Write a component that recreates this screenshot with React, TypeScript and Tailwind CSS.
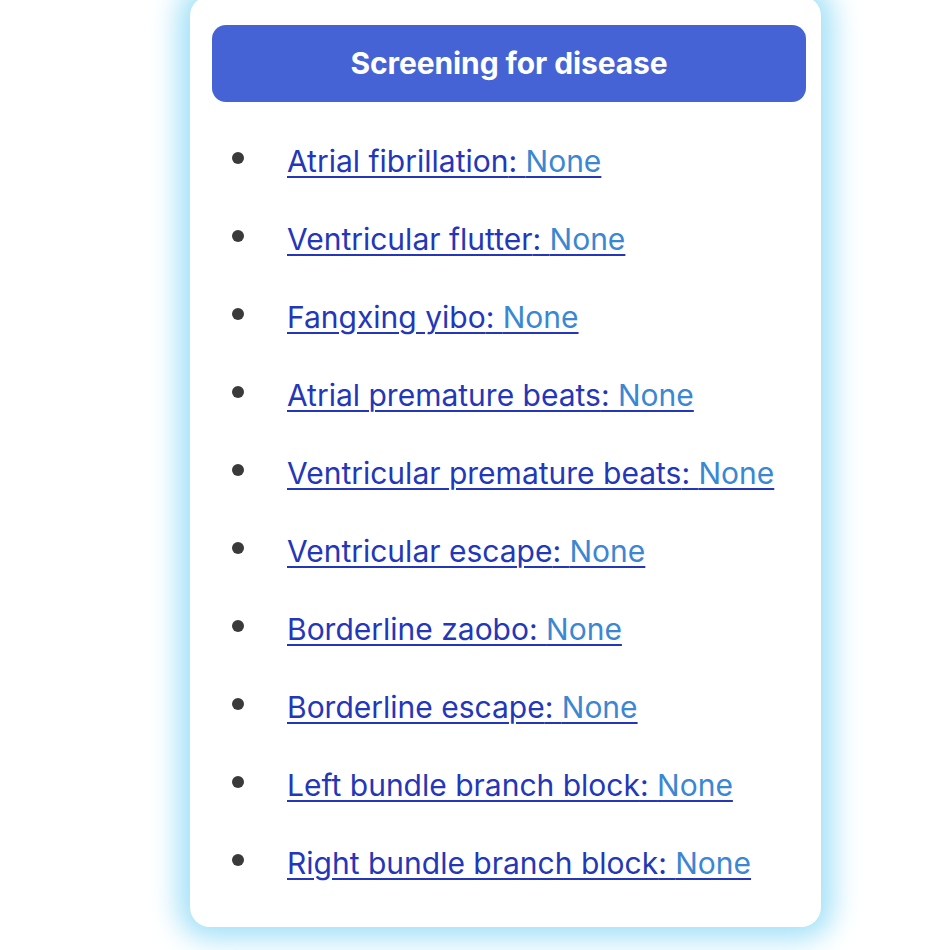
const items = [
  'Atrial fibrillation',
  'Ventricular flutter',
  'Fangxing yibo',
  'Atrial premature beats',
  'Ventricular premature beats',
  'Ventricular escape',
  'Borderline zaobo',
  'Borderline escape',
  'Left bundle branch block',
  'Right bundle branch block',
];

export default function App() {
  return (
    <div className="w-[950px] h-[950px] overflow-hidden bg-white">
      <div className="ml-[190px] -mt-[4px] w-[631px] h-[931px] rounded-[20px] bg-white shadow-[0_0_28px_12px_#a2e1f8] pt-[29px] pl-[22px] pr-[15px]">
        <div className="h-[77px] rounded-[14px] bg-[#4563d4] flex items-center justify-center">
          <span className="text-white text-[30px] font-bold font-['Inter',sans-serif] tracking-[-0.1px]">
            Screening for disease
          </span>
        </div>
        <ul className="mt-[20px] font-['Inter',sans-serif] text-[30px]">
          {items.map((label) => (
            <li key={label} className="flex items-center h-[78px]">
              <span className="w-[12px] h-[12px] rounded-full bg-[#3a3a3a] ml-[20px] mr-[43px] -mt-[6px]" />
              <a href="#" className="underline underline-offset-[4px] decoration-[1.5px] text-[#2437b8]">
                {label}: <span className="text-[#3b87d1]">None</span>
              </a>
            </li>
          ))}
        </ul>
      </div>
    </div>
  );
}
